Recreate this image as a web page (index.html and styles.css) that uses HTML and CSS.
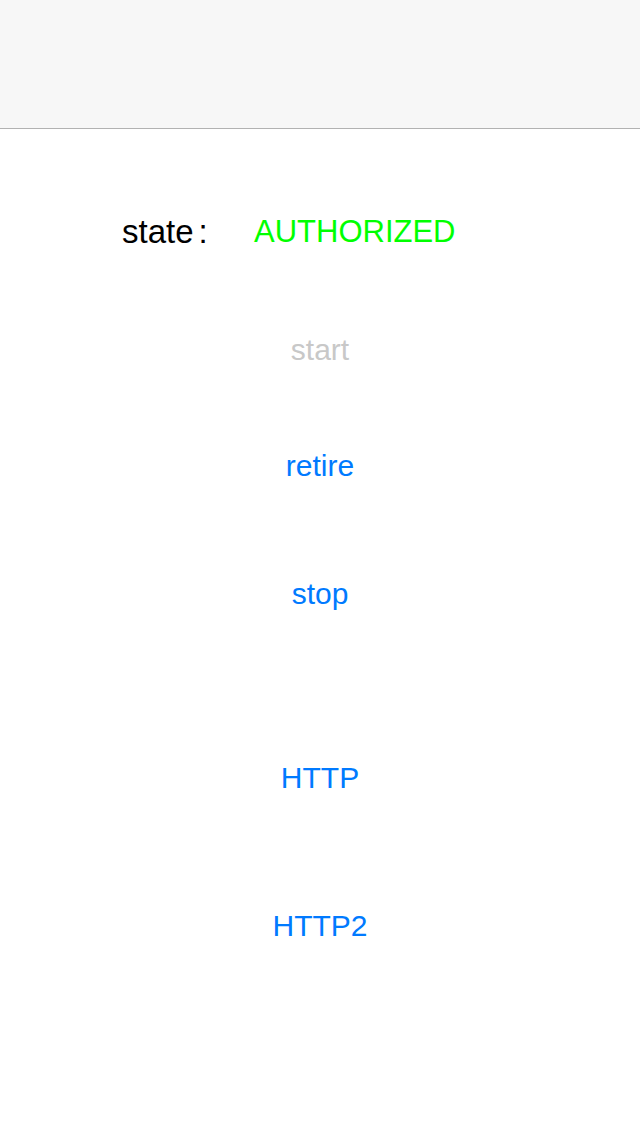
FILE: index.html
```html
<!DOCTYPE html>
<html>
<head>
<meta charset="utf-8">
<link rel="stylesheet" href="styles.css">
</head>
<body>
<div class="navbar"></div>
<div class="content">
  <div class="state-row">
    <span class="state-label">state<span class="colon">:</span></span>
    <span class="state-value">AUTHORIZED</span>
  </div>
  <div class="btn disabled gap-start">start</div>
  <div class="btn gap-retire">retire</div>
  <div class="btn gap-stop">stop</div>
  <div class="btn gap-http">HTTP</div>
  <div class="btn gap-http2">HTTP2</div>
</div>
</body>
</html>
```
FILE: styles.css
```css
html, body {
  margin: 0;
  padding: 0;
  background: #ffffff;
  font-family: "Liberation Sans", Arial, "Noto Sans CJK SC", sans-serif;
}
.navbar {
  height: 128px;
  background: #f7f7f7;
  border-bottom: 1px solid #b2b2b2;
}
.content {
  display: flex;
  flex-direction: column;
  align-items: center;
}
.state-row {
  margin-top: 73px;
  height: 60px;
  line-height: 60px;
  width: 100%;
  display: flex;
  padding-left: 122px;
  box-sizing: border-box;
}
.state-label {
  font-size: 33px;
  color: #000000;
  width: 132px;
}
.colon {
  margin-left: 5px;
}
.state-value {
  font-size: 31px;
  color: #00ff00;
}
.btn {
  height: 44px;
  line-height: 44px;
  font-size: 30px;
  color: #007aff;
  text-align: center;
}
.btn.disabled {
  color: #c8c8c8;
}
.gap-start { margin-top: 66px; }
.gap-retire { margin-top: 72px; }
.gap-stop { margin-top: 84px; }
.gap-http { margin-top: 140px; }
.gap-http2 { margin-top: 104px; }
```
